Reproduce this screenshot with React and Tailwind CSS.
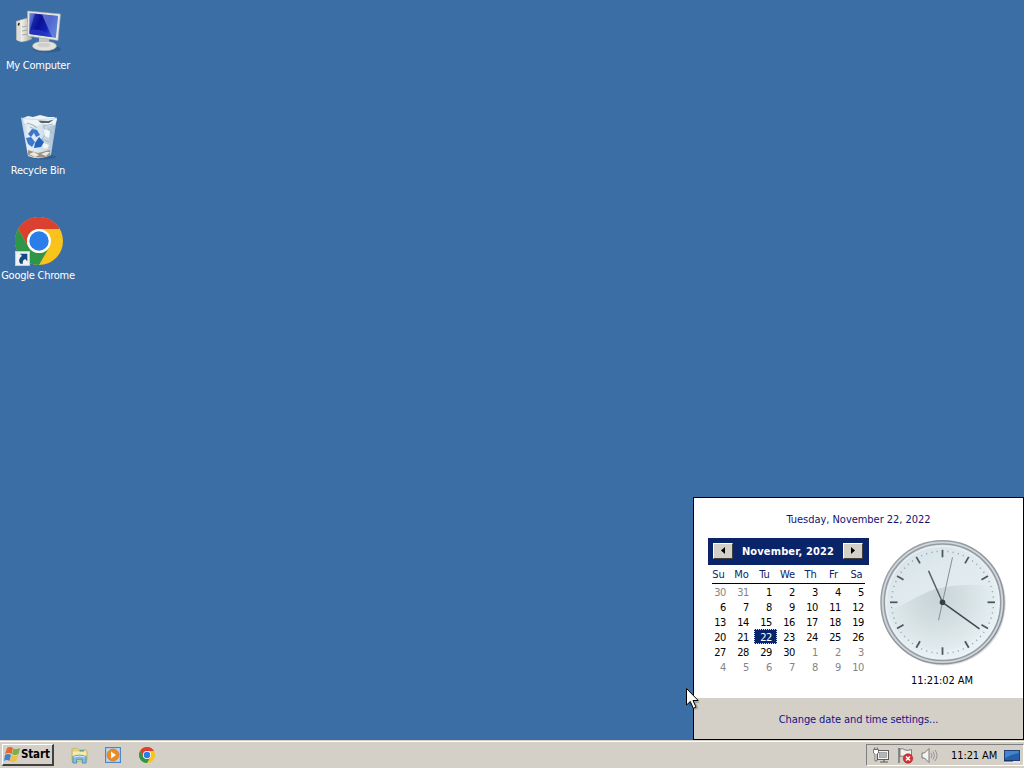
const DAY_NAMES = ['Su', 'Mo', 'Tu', 'We', 'Th', 'Fr', 'Sa'];
const DAYS = [30, 31, ...Array.from({ length: 30 }, (_, i) => i + 1), ...Array.from({ length: 10 }, (_, i) => i + 1)];

const ComputerIcon = () => (
  <svg className="h-12 w-12" viewBox="0 0 48 48">
    <defs>
      <linearGradient id="screen" x1="0" y1="0.1" x2="1" y2="0.5">
        <stop offset="0" stopColor="#5a72cc" />
        <stop offset="0.15" stopColor="#1a2bb0" />
        <stop offset="0.4" stopColor="#0a0f96" />
        <stop offset="0.7" stopColor="#1322b8" />
        <stop offset="1" stopColor="#4a6cd4" />
      </linearGradient>
      <linearGradient id="gloss" x1="0" y1="0" x2="1" y2="0.6">
        <stop offset="0" stopColor="#b4cbf2" />
        <stop offset="1" stopColor="#6f92e0" />
      </linearGradient>
      <linearGradient id="tower" x1="0" y1="0" x2="1" y2="0">
        <stop offset="0" stopColor="#b4b5ae" />
        <stop offset="0.3" stopColor="#f2f2ea" />
        <stop offset="1" stopColor="#a9aaa4" />
      </linearGradient>
    </defs>
    <ellipse cx="32" cy="41" rx="14" ry="3.500" fill="#244b78" opacity="0.5" />
    <path d="M1.500 13 L12 10 L17 31 L12 33 L7 34 L1.500 32 Z" fill="url(#tower)" stroke="#8d9090" strokeWidth="0.500" />
    <path d="M1.500 13 L5.500 14 L6 34 L1.500 32 Z" fill="#dcddd6" />
    <path d="M3 16 L4.500 16.500" stroke="#222" strokeWidth="2.500" />
    <path d="M7 19 L12 18 M7 23 L12 22 M7 27 L13 26" stroke="#969994" strokeWidth="0.800" />
    <path d="M24 29 L34 31 L34 38 L24 37 Z" fill="#c5c8c2" />
    <ellipse cx="29.500" cy="38" rx="12" ry="4.800" fill="#e3e3dc" stroke="#a5a8a6" strokeWidth="0.600" />
    <ellipse cx="29" cy="37" rx="6.500" ry="2.300" fill="#cdd0cc" />
    <path d="M12.500 3 L45.500 6 L43 32.500 L12.500 28 Z" fill="#e4e6e2" stroke="#a2a8aa" strokeWidth="0.600" />
    <path d="M14.500 5 L43 8 L40.800 29.800 L14.500 26 Z" fill="url(#screen)" />
    <path d="M27 6.500 L43 8 L40.800 29.800 L37 29 Z" fill="url(#gloss)" opacity="0.500" />
    <path d="M14.500 5 L20 5.600 L15 22 Z" fill="#9fb2e6" opacity="0.350" />
    <path d="M14.500 22 Q24 20 36 27 L37 29.200 L14.500 26Z" fill="#2a3fc8" opacity="0.700" />
  </svg>
);

const RecycleBinIcon = () => (
  <svg className="h-12 w-12" viewBox="0 0 48 48">
    <defs>
      <linearGradient id="bin" x1="0" y1="0" x2="1" y2="0">
        <stop offset="0" stopColor="#b3cde2" />
        <stop offset="0.2" stopColor="#e6eff5" />
        <stop offset="0.6" stopColor="#d3e0ea" />
        <stop offset="1" stopColor="#a3bace" />
      </linearGradient>
    </defs>
    <ellipse cx="28" cy="44" rx="13" ry="2.500" fill="#244b78" opacity="0.400" />
    <path d="M6 5 Q23 8 42 5 L36 42 Q25 48 13 43 Z" fill="url(#bin)" />
    <path d="M8 5 L13 3 L18 4 L25 2 L33 4 L39 4 L42 6 L40 12 L33 13 L28 10 L22 13 L14 11 L9 10 Z" fill="#eef3f5" />
    <path d="M23 7.500 L33 8 L39 6.500 L34 10 L26 10 Z" fill="#56656b" />
    <path d="M12 10 L18 12 L22 15 M28 13 L38 11 M28 13 L32 20 L27 26 L34 29 M33 16 L37 20 M15 14 L21 17" fill="none" stroke="#a8bac8" strokeWidth="1.100" />
    <path d="M29 16 L35 18 L34 25 L30 23 Z M28 30 L34 32 L32 36 L28 35Z" fill="#f1f6f8" />
    <path d="M6 5 Q20 8 42 5" fill="none" stroke="#c3dbed" strokeWidth="0.800" />
    <path d="M13 37 L23 40 L35 37 L35 42 Q24 47 13 42Z" fill="#9d9086" />
    <path d="M14 41 L19 39 L24 42 L20 44Z M26 41 L31 39 L35 39 L31 43Z" fill="#efe9dd" />
    <g fill="#3b78cc">
      <path d="M13 21 L17 16 L22 17 L25 22 L21 24 L19 20 L16 24Z" />
      <path d="M11 25 L16 24 L20 29 L17 34 L13 31Z" />
      <path d="M20 30 L24 24 L29 29 L26 34 L19 35Z" fill="#2563bd" />
    </g>
  </svg>
);

const ChromeIcon = ({ className }) => (
  <svg className={className} viewBox="0 0 48 48">
    <circle cx="24" cy="24" r="24" fill="#f9c31b" />
    <path d="M3.200 12 A24 24 0 0 1 44.800 12 L24 12 A12 12 0 0 0 13.600 30 Z" fill="#dc4031" />
    <path d="M3.200 12 A24 24 0 0 0 24 48 L34.400 30 A12 12 0 0 1 13.600 30 Z" fill="#2f9548" />
    <circle cx="24" cy="24" r="12" fill="#fff" />
    <circle cx="24" cy="24" r="9.700" fill="#2b7de9" />
  </svg>
);

const ShortcutArrow = () => (
  <svg className="absolute bottom-0 left-0 h-[15px] w-[15px]" viewBox="0 0 14 14">
    <rect x="0.500" y="0.500" width="13" height="13" fill="#eef3f6" stroke="#c3cdd4" />
    <path d="M4.500 2.500 H11.500 V9.500 L9.500 7.500 Q6.500 8.500 7.500 12 H5 Q2 8 6.500 4.500Z" fill="#174a85" />
  </svg>
);

const DesktopIcon = ({ label, children }) => (
  <div className="flex h-[105px] w-[76px] flex-col items-center">
    <div className="relative ml-[2px] h-12 w-12">{children}</div>
    <span className="mt-[3px] whitespace-nowrap leading-[14px] tracking-[-0.25px] text-white">{label}</span>
  </div>
);

const AnalogClock = () => (
  <svg className="h-[128px] w-[128px]" viewBox="-64.500 -64.300 128 128">
    <defs>
      <linearGradient id="face" x1="0" y1="0" x2="0.6" y2="1">
        <stop offset="0" stopColor="#d3e0e7" />
        <stop offset="0.4" stopColor="#e0eaee" />
        <stop offset="1" stopColor="#e8f1f4" />
      </linearGradient>
      <radialGradient id="shade" gradientUnits="userSpaceOnUse" cx="-6" cy="-6" r="58">
        <stop offset="0" stopColor="#c8d3d6" />
        <stop offset="0.45" stopColor="#d3dee1" />
        <stop offset="1" stopColor="#e4eef1" />
      </radialGradient>
      <linearGradient id="rim" x1="0" y1="0" x2="1" y2="1">
        <stop offset="0" stopColor="#9ca4a9" />
        <stop offset="1" stopColor="#858d95" />
      </linearGradient>
    </defs>
    <circle cx="1" cy="1" r="62.300" fill="#dfe0e2" />
    <circle r="61.500" fill="#d0d5da" stroke="url(#rim)" strokeWidth="1.500" />
    <circle r="58.200" fill="url(#face)" stroke="#939ca3" strokeWidth="1.500" />
    <path d="M-56 8 C-38 4 -26 -7 -8 -13 C14 -19 38 -18 54 -16 A56.500 56.500 0 0 1 -56 8Z" fill="url(#shade)" />
    <circle r="56.300" fill="none" stroke="#eef4f7" strokeWidth="1" />
    {Array.from({ length: 60 }, (_, i) => (
      <line
        key={i}
        x1="0"
        y1={i % 5 === 0 ? -45 : -50.3}
        x2="0"
        y2={i % 5 === 0 ? -52.5 : -51.8}
        stroke={i % 5 === 0 ? '#4c5a60' : '#9aaab2'}
        strokeWidth={i % 5 === 0 ? 1.8 : 1.2}
        transform={`rotate(${i * 6})`}
      />
    ))}
    <line x1="-4" y1="18" x2="10" y2="-45" stroke="#7c8589" strokeWidth="0.900" />
    <line x1="0" y1="0" x2="-14" y2="-31.500" stroke="#515e64" strokeWidth="1.500" />
    <line x1="0" y1="0" x2="37" y2="26.500" stroke="#3f494d" strokeWidth="1.500" />
    <circle r="2.800" fill="#344044" />
  </svg>
);

const MonthButton = ({ direction }) => (
  <button className="flex h-4 w-5 items-center justify-center border border-t-white border-r-[#404040] border-b-[#404040] border-l-white bg-[#d4d0c8]">
    <svg className="h-[7px] w-1" viewBox="0 0 4 7">
      <path d={direction === 'left' ? 'M4 0 V7 L0 3.500Z' : 'M0 0 V7 L4 3.500Z'} />
    </svg>
  </button>
);

const Calendar = () => (
  <div className="w-[161px]">
    <div className="flex h-[27px] items-center justify-between bg-[#0a246a] pr-[6px] pb-[2px] pl-[5px]">
      <MonthButton direction="left" />
      <span className="mt-1 whitespace-nowrap text-[11px] font-bold tracking-[0.12px] text-white">November, 2022</span>
      <MonthButton direction="right" />
    </div>
    <div className="mx-1 h-[19px] border-b border-black">
      <div className="-mr-[3px] -ml-[5px] grid grid-cols-7 pt-[1px] text-center leading-[18px] text-[#0a246a]">
        {DAY_NAMES.map((name) => (
          <span key={name}>{name}</span>
        ))}
      </div>
    </div>
    <div className="grid grid-cols-7 text-right leading-[15px] tracking-[-0.4px]">
      {DAYS.map((day, i) => {
        const outside = i < 2 || i > 31;
        const selected = i === 23;
        return (
          <span
            key={i}
            className={
              selected
                ? 'h-[15px] border border-dotted border-[#e6e2b8] bg-[#0a246a] pr-1 leading-[15px] text-white'
                : `h-[15px] pt-[1px] pr-[5px] ${outside ? 'text-[#858585]' : 'text-black'}`
            }
          >
            {day}
          </span>
        );
      })}
    </div>
  </div>
);

const DateTimePanel = () => (
  <div className="absolute right-0 bottom-0 flex h-[243px] w-[331px] flex-col border border-black bg-white">
    <div className="pt-[15px] text-center leading-[14px] tracking-[-0.04px] text-[#151070]">Tuesday, November 22, 2022</div>
    <div className="flex flex-1 pt-[11px] pl-[14px]">
      <Calendar />
      <div className="ml-[9px] flex w-[128px] flex-col items-center">
        <AnalogClock />
        <span className="mt-2 whitespace-nowrap leading-[14px] text-black">11:21:02 AM</span>
      </div>
    </div>
    <div className="flex h-[41px] items-center justify-center bg-[#d4d0c8] pt-[3px] tracking-[-0.1px] text-[#17108a]">Change date and time settings...</div>
  </div>
);

const WindowsFlag = () => (
  <svg className="h-[17px] w-[17px]" viewBox="0 0 17 17">
    <path d="M3 2 Q6 0 9 2 L7.500 8 Q4.500 6 1 8Z" fill="#e3692f" />
    <path d="M9.500 2.500 Q12 4 16 2 L14.500 8 Q11 10 8 8.300Z" fill="#7fae45" />
    <path d="M1 9 Q4 7 7 9 L5.500 15 Q3 13 0 15Z" fill="#4482c6" />
    <path d="M7.700 9.300 Q11 11 14.300 9 L12.500 15 Q9 17 6 15.200Z" fill="#efc043" />
  </svg>
);

const FolderIcon = () => (
  <svg className="h-[17px] w-[17px]" viewBox="0 0 18 18">
    <path d="M1 4 V2 L6 1 L8 3 H16 L17 5 V14 L2 16 L1 14Z" fill="#e4d27f" stroke="#b5a15c" strokeWidth="0.600" />
    <path d="M2 5 L16 4 V12 L2 13Z" fill="#f5eab0" />
    <path d="M9 4 H14" stroke="#5aa08c" strokeWidth="1.500" />
    <path d="M2 10 Q9 7 16 10 V17 H12 V13 H6 V17 H2Z" fill="#7fc0e2" stroke="#4583a8" strokeWidth="0.800" />
    <path d="M3 10.500 Q9 8.500 15 10.500" fill="none" stroke="#d6f0fb" />
  </svg>
);

const MediaPlayerIcon = () => (
  <svg className="h-4 w-4" viewBox="0 0 16 16">
    <rect x="0.500" y="0.500" width="15" height="15" fill="#a6c9e9" stroke="#4b86c8" />
    <rect x="2" y="2" width="12" height="12" fill="#bfdaee" />
    <circle cx="8" cy="8" r="6" fill="#ee8a22" stroke="#cf7219" strokeWidth="0.600" />
    <path d="M6 4.500 L11 8 L6 11.500Z" fill="#fff" />
  </svg>
);

const NetworkIcon = () => (
  <svg className="h-[17px] w-[17px]" viewBox="0 0 17 17">
    <rect x="4.500" y="3.500" width="11" height="9" fill="#f4f4f2" stroke="#5c5c5c" />
    <rect x="6.500" y="5.500" width="7" height="5" fill="#b4b7b8" stroke="#888" strokeWidth="0.600" />
    <path d="M7 15 H15 M11 13 V15" stroke="#5c5c5c" strokeWidth="1.100" />
    <path d="M0.500 2.500 H5.500 V6 L4 7 V14 H2 V7 L0.500 6Z" fill="#fff" stroke="#5c5c5c" strokeWidth="0.800" />
    <path d="M1.700 0.500 V2.500 M4.300 0.500 V2.500" stroke="#5c5c5c" strokeWidth="1" />
  </svg>
);

const FlagIcon = () => (
  <svg className="h-[17px] w-[17px]" viewBox="0 0 17 17">
    <path d="M2 1 V16" stroke="#555" strokeWidth="1.800" />
    <path d="M2 1.500 V16" stroke="#eee" strokeWidth="0.600" />
    <path d="M3 2 Q6 1 8 3 Q11 4 14.500 2.500 V9 Q11 11 8 9.500 Q6 8.500 3 9.500Z" fill="#f1f1ed" stroke="#666" strokeWidth="0.800" />
    <circle cx="11" cy="11.500" r="4.800" fill="#cf3434" stroke="#a42020" strokeWidth="0.500" />
    <path d="M9 9.500 L13 13.500 M13 9.500 L9 13.500" stroke="#fff" strokeWidth="1.600" />
  </svg>
);

const SpeakerIcon = () => (
  <svg className="h-[17px] w-[17px]" viewBox="0 0 17 17">
    <path d="M1 6 H3.500 L8 1.500 V15.500 L3.500 11 H1Z" fill="#f3f3f0" stroke="#6f6f6f" strokeWidth="0.900" />
    <path d="M10 6 Q12 8.500 10 11 M12 4.500 Q15 8.500 12 12.500 M14 3 Q18 8.500 14 14" fill="none" stroke="#8c8c8c" strokeWidth="0.900" />
  </svg>
);

const ShowDesktopIcon = () => (
  <svg className="h-[13px] w-4" viewBox="0 0 16 13">
    <rect x="0.500" y="0.500" width="15" height="10" fill="#245fae" stroke="#1d4172" />
    <path d="M1 1 H15 V3 Q8 4 1 8Z" fill="#4484cc" />
    <path d="M0 12 H16" stroke="#e9edf0" strokeWidth="1.500" />
    <path d="M0 11 H9" stroke="#1c2f49" />
  </svg>
);

const Taskbar = () => (
  <div className="flex h-7 items-center border-t border-[#d4d0c8] bg-[#d4d0c8] pt-[1px] shadow-[inset_0_1px_0_#fff]">
    <button className="ml-[2px] flex h-[22px] w-[52px] items-center border-t border-r-2 border-b-2 border-l border-t-white border-r-[#404040] border-b-[#404040] border-l-white pl-[1px]">
      <WindowsFlag />
      <span className="mt-[1px] text-[11.500px] font-bold tracking-[-0.15px] text-black">Start</span>
    </button>
    <div className="ml-[17px] flex items-center">
      <FolderIcon />
      <div className="ml-[17px]">
        <MediaPlayerIcon />
      </div>
      <ChromeIcon className="ml-[18px] h-4 w-4" />
    </div>
    <div className="ml-auto flex h-[22px] w-[158px] items-center border border-t-[#808080] border-r-white border-b-white border-l-[#808080] pl-[6px]">
      <NetworkIcon />
      <div className="ml-[7px]">
        <FlagIcon />
      </div>
      <div className="ml-[7px]">
        <SpeakerIcon />
      </div>
      <span className="mt-[2px] ml-[13px] whitespace-nowrap text-black">11:21 AM</span>
      <div className="ml-auto pt-[2px] pr-[3px]">
        <ShowDesktopIcon />
      </div>
    </div>
  </div>
);

const App = () => (
  <div className="relative flex h-[768px] w-[1024px] flex-col overflow-hidden bg-[#3a6ea5] font-['DejaVu_Sans_Condensed','DejaVu_Sans',sans-serif] text-[11px] tracking-[-0.1px]">
    <div className="relative flex-1">
      <div className="flex flex-col pt-2">
        <DesktopIcon label="My Computer">
          <ComputerIcon />
        </DesktopIcon>
        <DesktopIcon label="Recycle Bin">
          <RecycleBinIcon />
        </DesktopIcon>
        <DesktopIcon label="Google Chrome">
          <div className="-mt-[1px]">
            <ChromeIcon className="h-12 w-12" />
          </div>
          <ShortcutArrow />
        </DesktopIcon>
      </div>
      <DateTimePanel />
    </div>
    <Taskbar />
    {/* Mouse pointer */}
    <svg className="absolute top-[687px] left-[685px] h-[24px] w-[17px]" viewBox="0 0 17 24">
      <path d="M4 5 V20 L7 17 L10 23 L13.500 21.500 L11 16 H15Z" fill="#000" opacity="0.200" />
      <path d="M1.500 1.500 V18 L5.300 14.500 L8.300 21.300 L11 20 L8 13.500 H13.200Z" fill="#fff" stroke="#000" strokeWidth="1" />
    </svg>
  </div>
);

export default App;
